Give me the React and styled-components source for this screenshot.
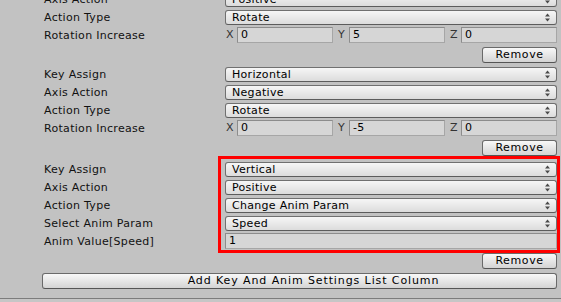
import React from 'react'
import styled, { createGlobalStyle } from 'styled-components'

const GlobalStyle = createGlobalStyle`
  body {
    margin: 0;
    background: #c2c2c2;
    font-family: "DejaVu Sans", "Liberation Sans", sans-serif;
    font-size: 11px;
    letter-spacing: 0.3px;
    color: #000;
    overflow: hidden;
  }
`

const Inspector = styled.div`
  width: 561px;
  height: 302px;
  overflow: hidden;
  background: #c2c2c2;
  display: flex;
  flex-direction: column;
`

const List = styled.div`
  display: flex;
  flex-direction: column;
  padding: 0 4px 0 44px;
  margin-top: -27px;
`

const Element = styled.div`
  display: flex;
  flex-direction: column;
  margin-top: ${p => p.$gap || 0}px;
`

const Highlight = styled.div`
  position: relative;
  &::after {
    content: '';
    position: absolute;
    top: -5px;
    bottom: -2px;
    left: 174px;
    right: -3px;
    border: 3px solid #ff0000;
    pointer-events: none;
  }
`

const Row = styled.div`
  display: grid;
  grid-template-columns: 181px 1fr;
  height: 18px;
`

const Label = styled.div`
  line-height: 17px;
  white-space: nowrap;
  color: #111;
`

const Popup = styled.div`
  height: 15px;
  margin-top: 1px;
  box-sizing: border-box;
  border: 1px solid #707070;
  border-bottom-color: #5c5c5c;
  border-radius: 3px;
  background: linear-gradient(#f6f6f6, #dcdcdc);
  display: flex;
  align-items: center;
  justify-content: space-between;
  padding: 0 6px;
  line-height: 13px;
`

const Field = styled.div`
  height: 16px;
  flex: 1;
  box-sizing: border-box;
  border: 1px solid #8c8c8c;
  border-bottom-color: #a6a6a6;
  border-right-color: #a6a6a6;
  background: #d6d6d6;
  padding-left: 3px;
  line-height: 14px;
`

const Vector = styled.div`
  display: grid;
  grid-template-columns: repeat(3, 1fr);
  gap: 4px;
`

const Axis = styled.div`
  display: flex;
`

const AxisLabel = styled.span`
  width: 12px;
  padding-left: 1px;
  box-sizing: border-box;
  line-height: 16px;
  color: #333;
`

const ButtonRow = styled.div`
  display: flex;
  justify-content: ${p => (p.$wide ? 'stretch' : 'flex-end')};
  margin-top: ${p => p.$top}px;
  padding: ${p => (p.$wide ? '0 4px 0 42px' : '0')};
`

const Button = styled.button`
  width: ${p => (p.$wide ? '100%' : '75px')};
  height: 16px;
  box-sizing: border-box;
  border: 1px solid #6a6a6a;
  border-bottom-color: #555;
  border-radius: 3px;
  background: linear-gradient(#f8f8f8, #d4d4d4);
  font: inherit;
  color: #000;
  padding: ${p => (p.$wide ? '0 0 0 28px' : '0')};
  line-height: 14px;
  letter-spacing: ${p => (p.$wide ? '0.9px' : '0.6px')};
`

const BottomBar = styled.div`
  margin-top: auto;
  height: 3px;
  border-top: 1px solid #7c7c7c;
  background: #c6c6c6;
`

function Arrows() {
  return (
    <svg width="5" height="9" viewBox="0 0 5 9">
      <path d="M2.5 0.5 L5 3.5 L0 3.5 Z" fill="#4a4a4a" />
      <path d="M0 5.5 L5 5.5 L2.5 8.5 Z" fill="#4a4a4a" />
    </svg>
  )
}

function PopupRow({ label, value }) {
  return (
    <Row>
      <Label>{label}</Label>
      <Popup>
        <span>{value}</span>
        <Arrows />
      </Popup>
    </Row>
  )
}

function VectorRow({ label, x, y, z }) {
  return (
    <Row>
      <Label>{label}</Label>
      <Vector>
        <Axis><AxisLabel>X</AxisLabel><Field>{x}</Field></Axis>
        <Axis><AxisLabel>Y</AxisLabel><Field>{y}</Field></Axis>
        <Axis><AxisLabel>Z</AxisLabel><Field>{z}</Field></Axis>
      </Vector>
    </Row>
  )
}

function RotateElement({ keyName, axis, y, gap }) {
  return (
    <Element $gap={gap}>
      <PopupRow label="Key Assign" value={keyName} />
      <PopupRow label="Axis Action" value={axis} />
      <PopupRow label="Action Type" value="Rotate" />
      <VectorRow label="Rotation Increase" x="0" y={y} z="0" />
      <ButtonRow $top={2}>
        <Button>Remove</Button>
      </ButtonRow>
    </Element>
  )
}

export default function App() {
  return (
    <>
      <GlobalStyle />
      <Inspector>
        <List>
          <RotateElement keyName="Horizontal" axis="Positive" y="5" />
          <RotateElement keyName="Horizontal" axis="Negative" y="-5" gap={3} />
          <Element $gap={5}>
            <Highlight>
              <PopupRow label="Key Assign" value="Vertical" />
              <PopupRow label="Axis Action" value="Positive" />
              <PopupRow label="Action Type" value="Change Anim Param" />
              <PopupRow label="Select Anim Param" value="Speed" />
              <Row>
                <Label>Anim Value[Speed]</Label>
                <Field>1</Field>
              </Row>
            </Highlight>
            <ButtonRow $top={2}>
              <Button>Remove</Button>
            </ButtonRow>
          </Element>
        </List>
        <ButtonRow $wide $top={4}>
          <Button $wide>Add Key And Anim Settings List Column</Button>
        </ButtonRow>
        <BottomBar />
      </Inspector>
    </>
  )
}
